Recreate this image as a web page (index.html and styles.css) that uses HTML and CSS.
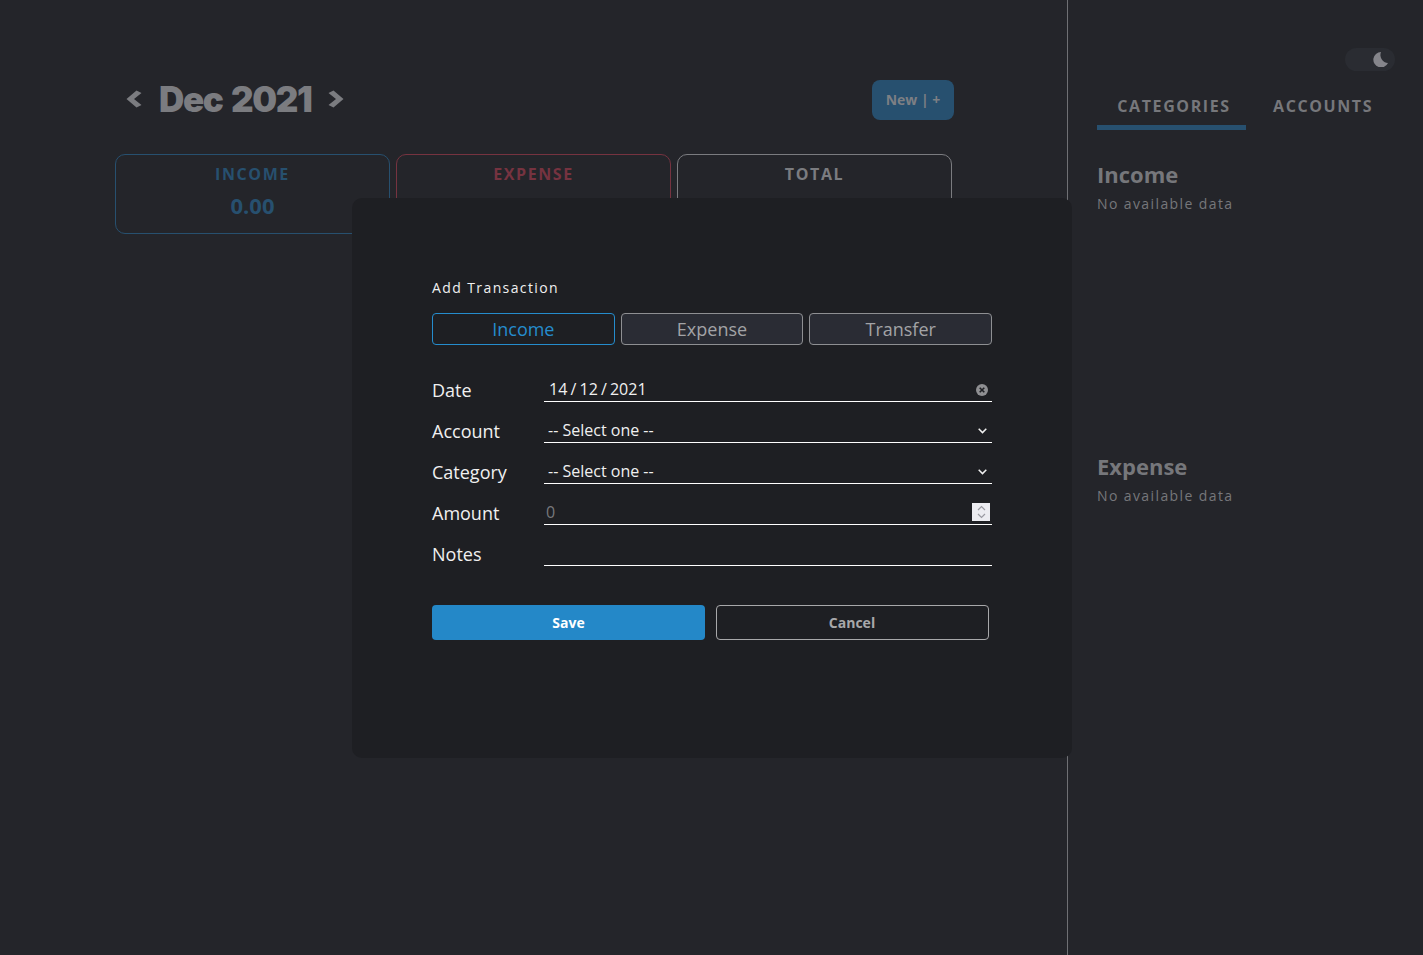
FILE: index.html
```html
<!DOCTYPE html>
<html lang="en">
<head>
<meta charset="utf-8">
<title>Add Transaction</title>
<link rel="stylesheet" href="styles.css">
</head>
<body>
<div class="app">
  <main class="main">
    <header class="month-bar">
      <div class="month-nav">
        <svg class="chev" width="16" height="18" viewBox="0 0 16 18"><path d="M10.500 0.500 L15.500 3 L8 9 L15.500 15 L10.500 17.500 L0.500 9 Z" fill="currentColor"/></svg>
        <h1 class="month-title">Dec 2021</h1>
        <svg class="chev" width="16" height="18" viewBox="0 0 16 18"><path d="M5.500 0.500 L0.500 3 L8 9 L0.500 15 L5.500 17.500 L15.500 9 Z" fill="currentColor"/></svg>
      </div>
      <button class="new-btn">New | +</button>
    </header>
    <section class="cards">
      <div class="card card-income"><div class="card-label">INCOME</div><div class="card-value">0.00</div></div>
      <div class="card card-expense"><div class="card-label">EXPENSE</div><div class="card-value">0.00</div></div>
      <div class="card card-total"><div class="card-label">TOTAL</div><div class="card-value">0.00</div></div>
    </section>
  </main>
  <aside class="side">
    <div class="toggle-row">
      <div class="toggle">
        <svg width="15" height="15" viewBox="0 0 15 15"><path d="M8 0 A7.700 7.700 0 1 0 15 11 A8 8 0 0 1 8 0 Z" fill="currentColor"/></svg>
      </div>
    </div>
    <nav class="side-tabs">
      <div class="side-tab side-tab-active">CATEGORIES</div>
      <div class="side-tab">ACCOUNTS</div>
    </nav>
    <section class="side-section">
      <h2 class="side-title">Income</h2>
      <p class="side-empty">No available data</p>
    </section>
    <section class="side-section">
      <h2 class="side-title">Expense</h2>
      <p class="side-empty">No available data</p>
    </section>
  </aside>
</div>
<div class="overlay">
  <form class="modal">
    <div class="modal-title">Add Transaction</div>
    <div class="type-tabs">
      <button type="button" class="type-tab type-tab-active">Income</button>
      <button type="button" class="type-tab">Expense</button>
      <button type="button" class="type-tab">Transfer</button>
    </div>
    <div class="fields">
      <div class="field">
        <label class="field-label">Date</label>
        <div class="control date-control">
          <span class="date-text">14 / 12 / 2021</span>
          <svg class="clear-icon" width="12" height="12" viewBox="0 0 12 12"><circle cx="6" cy="6" r="6" fill="#8f8f92"/><path d="M3.700 3.700 L8.300 8.300 M8.300 3.700 L3.700 8.300" stroke="#1f2024" stroke-width="1.600"/></svg>
        </div>
      </div>
      <div class="field">
        <label class="field-label">Account</label>
        <select class="control select"><option>-- Select one --</option></select>
      </div>
      <div class="field">
        <label class="field-label">Category</label>
        <select class="control select"><option>-- Select one --</option></select>
      </div>
      <div class="field">
        <label class="field-label">Amount</label>
        <div class="control amount-control">
          <input class="text-input" type="text" placeholder="0">
          <span class="spinner">
            <svg width="9" height="14" viewBox="0 0 9 14"><path d="M1 5 L4.500 1.500 L8 5 M1 9 L4.500 12.500 L8 9" fill="none" stroke="#9a9aa2" stroke-width="1.200"/></svg>
          </span>
        </div>
      </div>
      <div class="field">
        <label class="field-label">Notes</label>
        <div class="control notes-control"><input class="text-input" type="text"></div>
      </div>
    </div>
    <div class="actions">
      <button type="button" class="btn btn-save">Save</button>
      <button type="button" class="btn btn-cancel">Cancel</button>
    </div>
  </form>
</div>
</body>
</html>
```
FILE: styles.css
```css
* { box-sizing: border-box; }
html, body { margin: 0; height: 100%; }
body {
  background: #24252a;
  font-family: "Open Sans", sans-serif;
  overflow: hidden;
}
.app { display: flex; height: 955px; }
.main { width: 1068px; border-right: 1px solid #6f7074; padding: 80px 115px 0; }
.month-bar { display: flex; justify-content: space-between; width: 839px; height: 40px; }
.month-nav { display: flex; align-items: center; gap: 17px; padding-left: 11px; color: #7b7c80; height: 38px; }
.month-title {
  margin: 0;
  font-family: Inter, sans-serif;
  font-size: 35px;
  font-weight: 900;
  letter-spacing: -1.4px;
  word-spacing: 3px;
  color: #7b7c80;
}
.chev { display: block; }
.new-btn {
  width: 82px; height: 40px;
  border: 0; border-radius: 8px;
  background: #27506f;
  color: #7d7f84;
  font: 700 14px "Open Sans", sans-serif;
  padding: 0 0 2px;
}
.cards { display: flex; gap: 6px; margin-top: 34px; width: 837px; }
.card {
  flex: 1; height: 80px;
  border: 1px solid; border-radius: 10px;
  text-align: center;
  padding-top: 8px;
}
.card-label { font-size: 16px; font-weight: 700; letter-spacing: 1.6px; line-height: 22px; }
.card-value { font-size: 22px; font-weight: 700; line-height: 30px; margin-top: 5px; }
.card-income { border-color: #27506f; color: #27506f; }
.card-expense { border-color: #763340; color: #763340; }
.card-total { border-color: #7b7c80; color: #7b7c80; }
.side { flex: 1; padding: 48px 0 0 29px; }
.toggle-row { display: flex; justify-content: flex-end; padding-right: 28px; }
.toggle {
  width: 50px; height: 23px; border-radius: 12px;
  background: #2a2c32;
  display: flex; align-items: center; justify-content: flex-end;
  padding-right: 7px;
  color: #85858b;
}
.side-tabs { display: flex; margin-top: 15px; gap: 27px; }
.side-tab {
  font-size: 16px; font-weight: 700; letter-spacing: 1.6px;
  color: #76777b;
  line-height: 22px;
  padding-top: 9px; height: 44px;
}
.side-tab-active { width: 149px; padding-left: 5px; text-align: center; border-bottom: 5px solid #27506f; }
.side-section { height: 292px; padding-top: 29px; }
.side-title { margin: 0; font-size: 22px; font-weight: 700; line-height: 30px; color: #76777b; }
.side-empty { margin: 5px 0 0; font-size: 14px; letter-spacing: 1.4px; line-height: 20px; color: #76777b; }
.overlay {
  position: fixed; inset: 0;
  display: flex; align-items: center; justify-content: center;
  padding: 1px 0 0 1px;
}
.modal {
  width: 720px; height: 560px;
  background: #1e1f23;
  border-radius: 10px;
  padding: 80px;
  color: #fff;
}
.modal-title { font-size: 14px; letter-spacing: 1.4px; line-height: 20px; color: #f0f0f0; }
.type-tabs { display: flex; gap: 6px; margin-top: 15px; }
.type-tab {
  flex: 1; height: 32px;
  background: #2a2c34;
  border: 1px solid #8e8f92; border-radius: 4px;
  color: #a2a3a6;
  font: 400 18px "Open Sans", sans-serif;
  padding: 0;
}
.type-tab-active { background: transparent; border-color: #258ccd; color: #258ccd; }
.fields { display: flex; flex-direction: column; gap: 11px; margin-top: 27px; }
.field { display: flex; align-items: flex-end; height: 30px; }
.field-label { width: 112px; font-size: 18px; line-height: 24px; color: #f0f0f0; }
.control {
  width: 448px; height: 30px;
  border: 0; border-bottom: 1px solid #fff;
  background: transparent;
  color: #f0f0f0;
  font: 400 16px "Open Sans", sans-serif;
}
.date-control { display: flex; align-items: center; justify-content: space-between; padding: 4px 4px 0 5px; }
.date-text { word-spacing: -1px; }
.clear-icon { margin-top: 3px; }
.select {
  appearance: none;
  padding: 4px 0 0 4px;
  background-image: url("data:image/svg+xml,%3Csvg xmlns='http://www.w3.org/2000/svg' width='9' height='6' viewBox='0 0 9 6'%3E%3Cpath d='M.7.8 4.500 4.600 8.300.8' fill='none' stroke='%23f0f0f0' stroke-width='1.500'/%3E%3C/svg%3E");
  background-repeat: no-repeat;
  background-position: right 5px top 15px;
}
.select option { background: #1e1f23; }
.amount-control { display: flex; align-items: center; padding: 4px 2px 0 0; }
.notes-control { padding-top: 4px; }
.text-input {
  flex: 1; width: 100%; height: 24px;
  border: 0; outline: 0; background: transparent;
  color: #f0f0f0; padding: 0 2px;
  font: 400 16px "Open Sans", sans-serif;
}
.text-input::placeholder { color: #77787c; opacity: 1; }
.spinner {
  width: 18px; height: 18px; background: #ececf1;
  display: flex; align-items: center; justify-content: center;
}
.actions { display: flex; gap: 11px; margin-top: 39px; }
.btn {
  width: 273px; height: 35px; border-radius: 4px;
  font: 700 14px "Open Sans", sans-serif;
  padding: 0;
}
.btn-save { background: #2488c8; border: 0; color: #fff; }
.btn-cancel { background: transparent; border: 1px solid #a8a8aa; color: #a8a8aa; padding-right: 1px; }
```
